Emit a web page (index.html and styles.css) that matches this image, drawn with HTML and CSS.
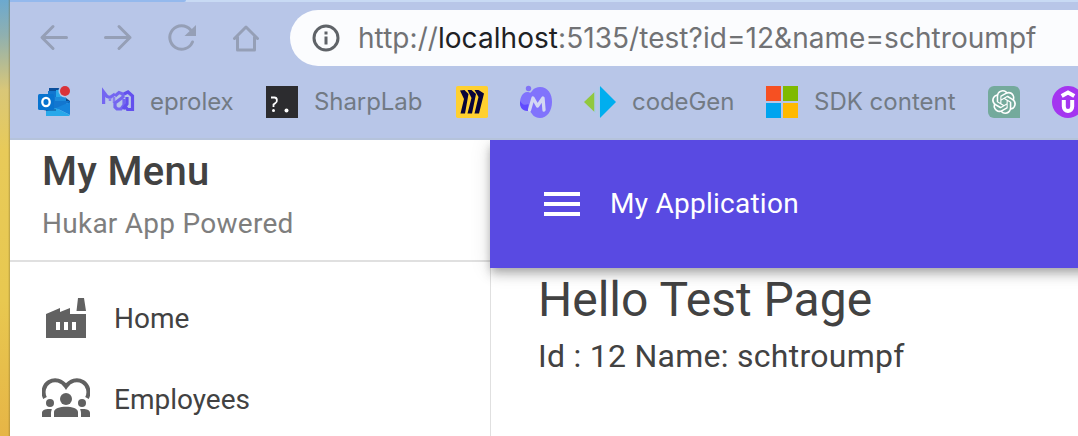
FILE: index.html
```html
<!DOCTYPE html>
<html lang="en">
<head>
<meta charset="utf-8">
<title>My Application</title>
<link rel="stylesheet" href="styles.css">
</head>
<body>
<div class="desktop"></div>
<div class="window">
  <div class="tabstrip"><div class="tab-edge"></div></div>
  <header class="chrome">
    <div class="toolbar">
      <nav class="nav">
        <svg class="nav-icon" viewBox="0 0 32 32"><path d="M28.5 15.5H5M15 4.5L4 15.5L15 26.500"/></svg>
        <svg class="nav-icon" viewBox="0 0 32 32"><path d="M3.500 15.500H28M17 4.500L28 15.500L17 26.500"/></svg>
        <svg class="nav-icon" viewBox="0 0 32 32"><path d="M26.500 20A11.800 11.800 0 1 1 24.500 7.700"/><path class="solid" d="M30 3V14H18.500Z"/></svg>
        <svg class="nav-icon" viewBox="0 0 32 32"><path d="M4.500 16.500L16 5L27.500 16.500M7.500 15V28H24.500V15"/></svg>
      </nav>
      <div class="omnibox">
        <svg class="info" viewBox="0 0 28 28"><circle cx="14" cy="14" r="12"/><path d="M14 12.500V20.500M14 7.500V10.500"/></svg>
        <span class="url">http://<span class="host">localhost</span>:5135/test?id=12&amp;name=schtroumpf</span>
      </div>
    </div>
    <div class="bookmarks">
      <svg class="fav" viewBox="0 0 32 32">
        <path fill="#0a4f9c" d="M11 2h16v13H11z"/><path fill="#1276cf" d="M10 5h10v10H10z"/><path fill="#29a8ea" d="M18 4h10v7H18z"/><path fill="#1d8bdb" d="M17 11h11v8H17z"/>
        <path fill="#0b4a8e" d="M28 12l4 3v2H28z"/><path fill="#1276cf" d="M8 15h24L22 23 8 27z"/><path fill="#1685dc" d="M32 16v13L18 22z"/><path fill="#28a8ea" d="M8 25l10-3 14 7-1 1H8z"/>
        <path fill="#0b4a8e" d="M3 23h15v2H8z" opacity=".5"/>
        <rect y="8" width="16" height="16" rx="1.500" fill="#0873cf"/><ellipse cx="8" cy="16" rx="3.700" ry="4.200" fill="none" stroke="#fff" stroke-width="2.300"/>
        <circle cx="27" cy="5" r="6.500" fill="#b8c6e8"/><circle cx="27" cy="5" r="5" fill="#d93239"/>
      </svg>
      <div class="bookmark">
        <svg class="fav" viewBox="0 0 32 32" fill="none" stroke="#6b5cf0" stroke-width="3.200">
          <path stroke="#7466f2" d="M1.600 18V6L5 10.500L8 11.500L13 8"/><path stroke="#897eee" stroke-width="2.500" d="M12 11V17M8 12V15"/><path stroke="#7466f0" d="M13 10L17 6.500L21 8V11L13 17V21L15 23H19L22 19V13"/><path stroke="#6350ee" d="M22 8L26 6L30.500 10V23.500H25.500L23.500 21M25 11V18L21 23"/>
        </svg>
        <span class="label label-eprolex">eprolex</span>
      </div>
      <div class="bookmark">
        <svg class="fav" viewBox="0 0 32 32"><path fill="#2c2c2f" d="M0 0h32v32H0z"/><path d="M5 11.500H8.500C11.500 11.500 11.500 16 9.500 17L7.500 18.500V21" fill="none" stroke="#fff" stroke-width="1.800"/><circle cx="7.500" cy="24.500" r="1.500" fill="#fff"/><circle cx="20.500" cy="24.500" r="2" fill="#fff"/></svg>
        <span class="label label-sharp">SharpLab</span>
      </div>
      <svg class="fav" viewBox="0 0 32 32"><rect width="32" height="32" rx="1.800" fill="#ffd02f"/><path fill="#08043a" d="M4 4.500L8.500 4L12.500 8L9 27.500H4.500L8 13ZM11.500 4H15.500L20 8L16 27.500H11.500L15.500 12ZM18.500 4H22.500L28 7.500L23 27.500H18.500L22.500 11Z"/></svg>
      <svg class="fav" viewBox="0 0 32 32"><circle cx="8.500" cy="2.500" r="2.700" fill="#8173f7"/><path fill="#8173fc" d="M20 1C28 1 32 8 32 16C32 25 27 32 20 32C14 32 12 28 10 25C4 25 0 22 0 17C0 11 3 6 7 6C10 6 10 8 12 5C14 2 17 1 20 1Z"/><path fill="#604aff" d="M0 15C3 20 6 19 8.500 18L8 25C3 25 0 22 0 17Z"/><path d="M9.500 24L13 12L17.500 20L23 12L24 24" fill="none" stroke="#d3d8f3" stroke-width="3.300" stroke-linecap="round" stroke-linejoin="round"/></svg>
      <div class="bookmark">
        <svg class="fav" viewBox="0 0 32 32"><path fill="#91c83e" d="M10.500 6V26L0 16Z"/><path fill="#a7cde8" d="M10.500 5h1.500v22h-1.500zM14.800 1h1.500v30h-1.500z"/><path fill="#00aeef" d="M16 0L32 16L16 32Z"/></svg>
        <span class="label label-codegen">codeGen</span>
      </div>
      <div class="bookmark">
        <svg class="fav" viewBox="0 0 32 32"><path fill="#f65022" d="M0 0h15v15H0z"/><path fill="#7fba00" d="M17 0h15v15H17z"/><path fill="#00a4ef" d="M0 17h15v15H0z"/><path fill="#ffb900" d="M17 17h15v15H17z"/></svg>
        <span class="label label-sdk">SDK content</span>
      </div>
      <svg class="fav" viewBox="0 0 32 32"><path fill="#74aa9c" d="M6 0h20a6 6 0 0 1 6 6v26H6a6 6 0 0 1-6-6V6a6 6 0 0 1 6-6z"/><path fill="#fff" transform="translate(4 4)" d="M22.282 9.821a5.985 5.985 0 0 0-.516-4.910 6.046 6.046 0 0 0-6.510-2.900A6.065 6.065 0 0 0 4.981 4.182a5.985 5.985 0 0 0-3.998 2.900 6.046 6.046 0 0 0 .743 7.097 5.980 5.980 0 0 0 .510 4.911 6.051 6.051 0 0 0 6.515 2.900A5.985 5.985 0 0 0 13.260 24a6.056 6.056 0 0 0 5.772-4.206 5.990 5.990 0 0 0 3.998-2.900 6.056 6.056 0 0 0-.748-7.073zM13.260 22.430a4.476 4.476 0 0 1-2.876-1.040l.142-.081 4.778-2.758a.795.795 0 0 0 .393-.681v-6.737l2.020 1.169a.071.071 0 0 1 .038.052v5.582a4.504 4.504 0 0 1-4.495 4.494zM3.600 18.304a4.471 4.471 0 0 1-.535-3.014l.142.085 4.783 2.759a.771.771 0 0 0 .780 0l5.843-3.369v2.333a.080.080 0 0 1-.033.061L9.740 19.950a4.500 4.500 0 0 1-6.140-1.646zM2.341 7.896a4.485 4.485 0 0 1 2.365-1.973V11.600a.766.766 0 0 0 .388.677l5.815 3.354-2.020 1.169a.076.076 0 0 1-.071 0l-4.831-2.787A4.504 4.504 0 0 1 2.341 7.872zm16.596 3.856l-5.833-3.388L15.119 7.200a.076.076 0 0 1 .071 0l4.831 2.792a4.494 4.494 0 0 1-.677 8.104v-5.677a.790.790 0 0 0-.407-.667zm2.011-3.023l-.142-.085-4.774-2.782a.776.776 0 0 0-.785 0L9.409 9.230V6.897a.066.066 0 0 1 .028-.061l4.830-2.787a4.499 4.499 0 0 1 6.681 4.660zM8.307 12.863l-2.020-1.164a.080.080 0 0 1-.038-.057V6.075a4.499 4.499 0 0 1 7.376-3.454l-.142.081L8.704 5.460a.795.795 0 0 0-.393.681zm1.097-2.365l2.602-1.500 2.607 1.500v2.999l-2.597 1.500-2.607-1.500z"/></svg>
      <svg class="fav" viewBox="0 0 32 32"><circle cx="16" cy="16" r="16" fill="#a435f0"/><path fill="none" stroke="#fff" stroke-width="4" d="M9.700 10L16 6.500L22.300 10M11.800 14V20.500C11.800 26.500 20.200 26.500 20.200 20.500V14"/></svg>
    </div>
  </header>
  <div class="page">
    <aside class="drawer">
      <div class="drawer-header">
        <div class="drawer-title">My Menu</div>
        <div class="drawer-subtitle">Hukar App Powered</div>
      </div>
      <ul class="menu">
        <li class="item"><svg class="item-icon" viewBox="0 0 48 48"><path fill-rule="evenodd" d="M4 20L18 14V18L28 14V20H44V44H4ZM14 28V36H18V28ZM22 28V36H26V28ZM30 28V36H34V28ZM36 4H42L44 17H34.500Z"/></svg><span>Home</span></li>
        <li class="item"><svg class="item-icon" viewBox="0 0 48 48"><path d="M3 23C0 17 2 10 7 7C13 3.500 20 5.500 24 11.500C28 5.500 35 3.500 41 7C46 10 48 17 45 23" fill="none" stroke="#616161" stroke-width="4"/><circle cx="24" cy="24" r="6"/><circle cx="8" cy="28" r="4"/><circle cx="40" cy="28" r="4"/><path d="M12 42V37C12 30 36 30 36 37V42ZM0 42V38C0 35 4 33.500 10 34.200Q9 36 9 38V42ZM48 42V38C48 35 44 33.500 38 34.200Q39 36 39 38V42Z"/></svg><span>Employees</span></li>
      </ul>
    </aside>
    <div class="main">
      <div class="appbar">
        <svg class="burger" viewBox="0 0 36 24"><path d="M0 0h36v4H0zM0 10h36v4H0zM0 20h36v4H0z"/></svg>
        <span class="app-name">My Application</span>
      </div>
      <main class="content">
        <h1 class="heading">Hello Test Page</h1>
        <p class="details">Id : 12 Name: schtroumpf</p>
      </main>
    </div>
  </div>
</div>
</body>
</html>
```
FILE: styles.css
```css
* { box-sizing: border-box; }
body { margin: 0; width: 1078px; height: 436px; overflow: hidden; display: flex; background: #fff; font-family: Roboto, sans-serif; color: #424242; }
.desktop { width: 10px; flex: none; background: linear-gradient(90deg, transparent 80%, #70602a66), linear-gradient(#6ca9cf 0, #8fb0b0 35px, #d9c778 90px, #e8ca59 150px, #e8c850 300px, #e6b546 436px); }
.window { flex: 1; min-width: 0; display: flex; flex-direction: column; }
.tabstrip { height: 2px; background: #c8daf4; }
.tab-edge { width: 176px; height: 2px; background: #94b9ed; border-bottom-right-radius: 3px; }
.chrome { height: 138px; flex: none; background: #b8c6e8; border-bottom: 2px solid #b5c3db; font-family: Inter, sans-serif; }
.toolbar { height: 72px; display: flex; padding: 8px 0 8px 28px; }
.nav { width: 252px; display: flex; gap: 32px; align-items: center; }
.nav-icon { width: 32px; height: 32px; fill: none; stroke: #959fb6; stroke-width: 3; stroke-linecap: round; stroke-linejoin: round; }
.nav-icon .solid { fill: #959fb6; stroke: none; }
.omnibox { flex: 1; height: 56px; display: flex; align-items: center; padding-left: 22px; gap: 18px; background: #fbfcfe; border-radius: 28px 0 0 28px; }
.info { width: 28px; height: 28px; flex: none; fill: none; stroke: #5f6368; stroke-width: 3; }
.url { font-size: 28px; letter-spacing: .05px; color: #717275; white-space: nowrap; }
.host { color: #202124; }
.bookmarks { display: flex; align-items: center; gap: 32px; height: 56px; padding-left: 28px; }
.fav { width: 32px; height: 32px; flex: none; overflow: visible; }
.bookmark { display: flex; align-items: center; gap: 16px; flex: none; }
.label { font-size: 24px; line-height: 32px; letter-spacing: -.08px; color: #727a84; white-space: nowrap; }
.label-eprolex { width: 84px; }
.label-sharp { width: 110px; }
.label-codegen { width: 102px; }
.label-sdk { width: 142px; letter-spacing: 0; }
.page { flex: 1; display: flex; }
.drawer { width: 481px; border-right: 1px solid #e0e0e0; }
.drawer-header { height: 122px; padding: 0 32px; border-bottom: 2px solid #e0e0e0; white-space: nowrap; }
.drawer-title { height: 64px; line-height: 64px; font-size: 40px; font-weight: 500; letter-spacing: .3px; }
.drawer-subtitle { line-height: 40px; font-size: 28px; letter-spacing: .26px; color: #7e7e7e; }
.menu { list-style: none; margin: 0; padding: 16px 32px; }
.item { display: flex; align-items: center; gap: 24px; height: 81px; font-size: 28px; }
.item-icon { width: 48px; height: 48px; margin-bottom: 1px; fill: #616161; }
.main { flex: 1; margin-left: -1px; min-width: 0; }
.appbar { position: relative; height: 128px; margin-right: -24px; padding-left: 54px; display: flex; align-items: center; gap: 30px; background: #594ae2; color: #fff; clip-path: inset(0 0 -40px -40px); box-shadow: 0 4px 8px -2px #0003, 0 8px 10px #00000024, 0 2px 20px #0000001f; }
.burger { width: 36px; height: 24px; fill: #fff; }
.app-name { padding-bottom: 2px; font-size: 28px; letter-spacing: .26px; }
.content { padding: 4px 48px; }
.heading { margin: 0; font-size: 48px; line-height: 56px; font-weight: 400; }
.details { margin: 4px 0 0; font-size: 32px; line-height: 48px; letter-spacing: .27px; }
```
